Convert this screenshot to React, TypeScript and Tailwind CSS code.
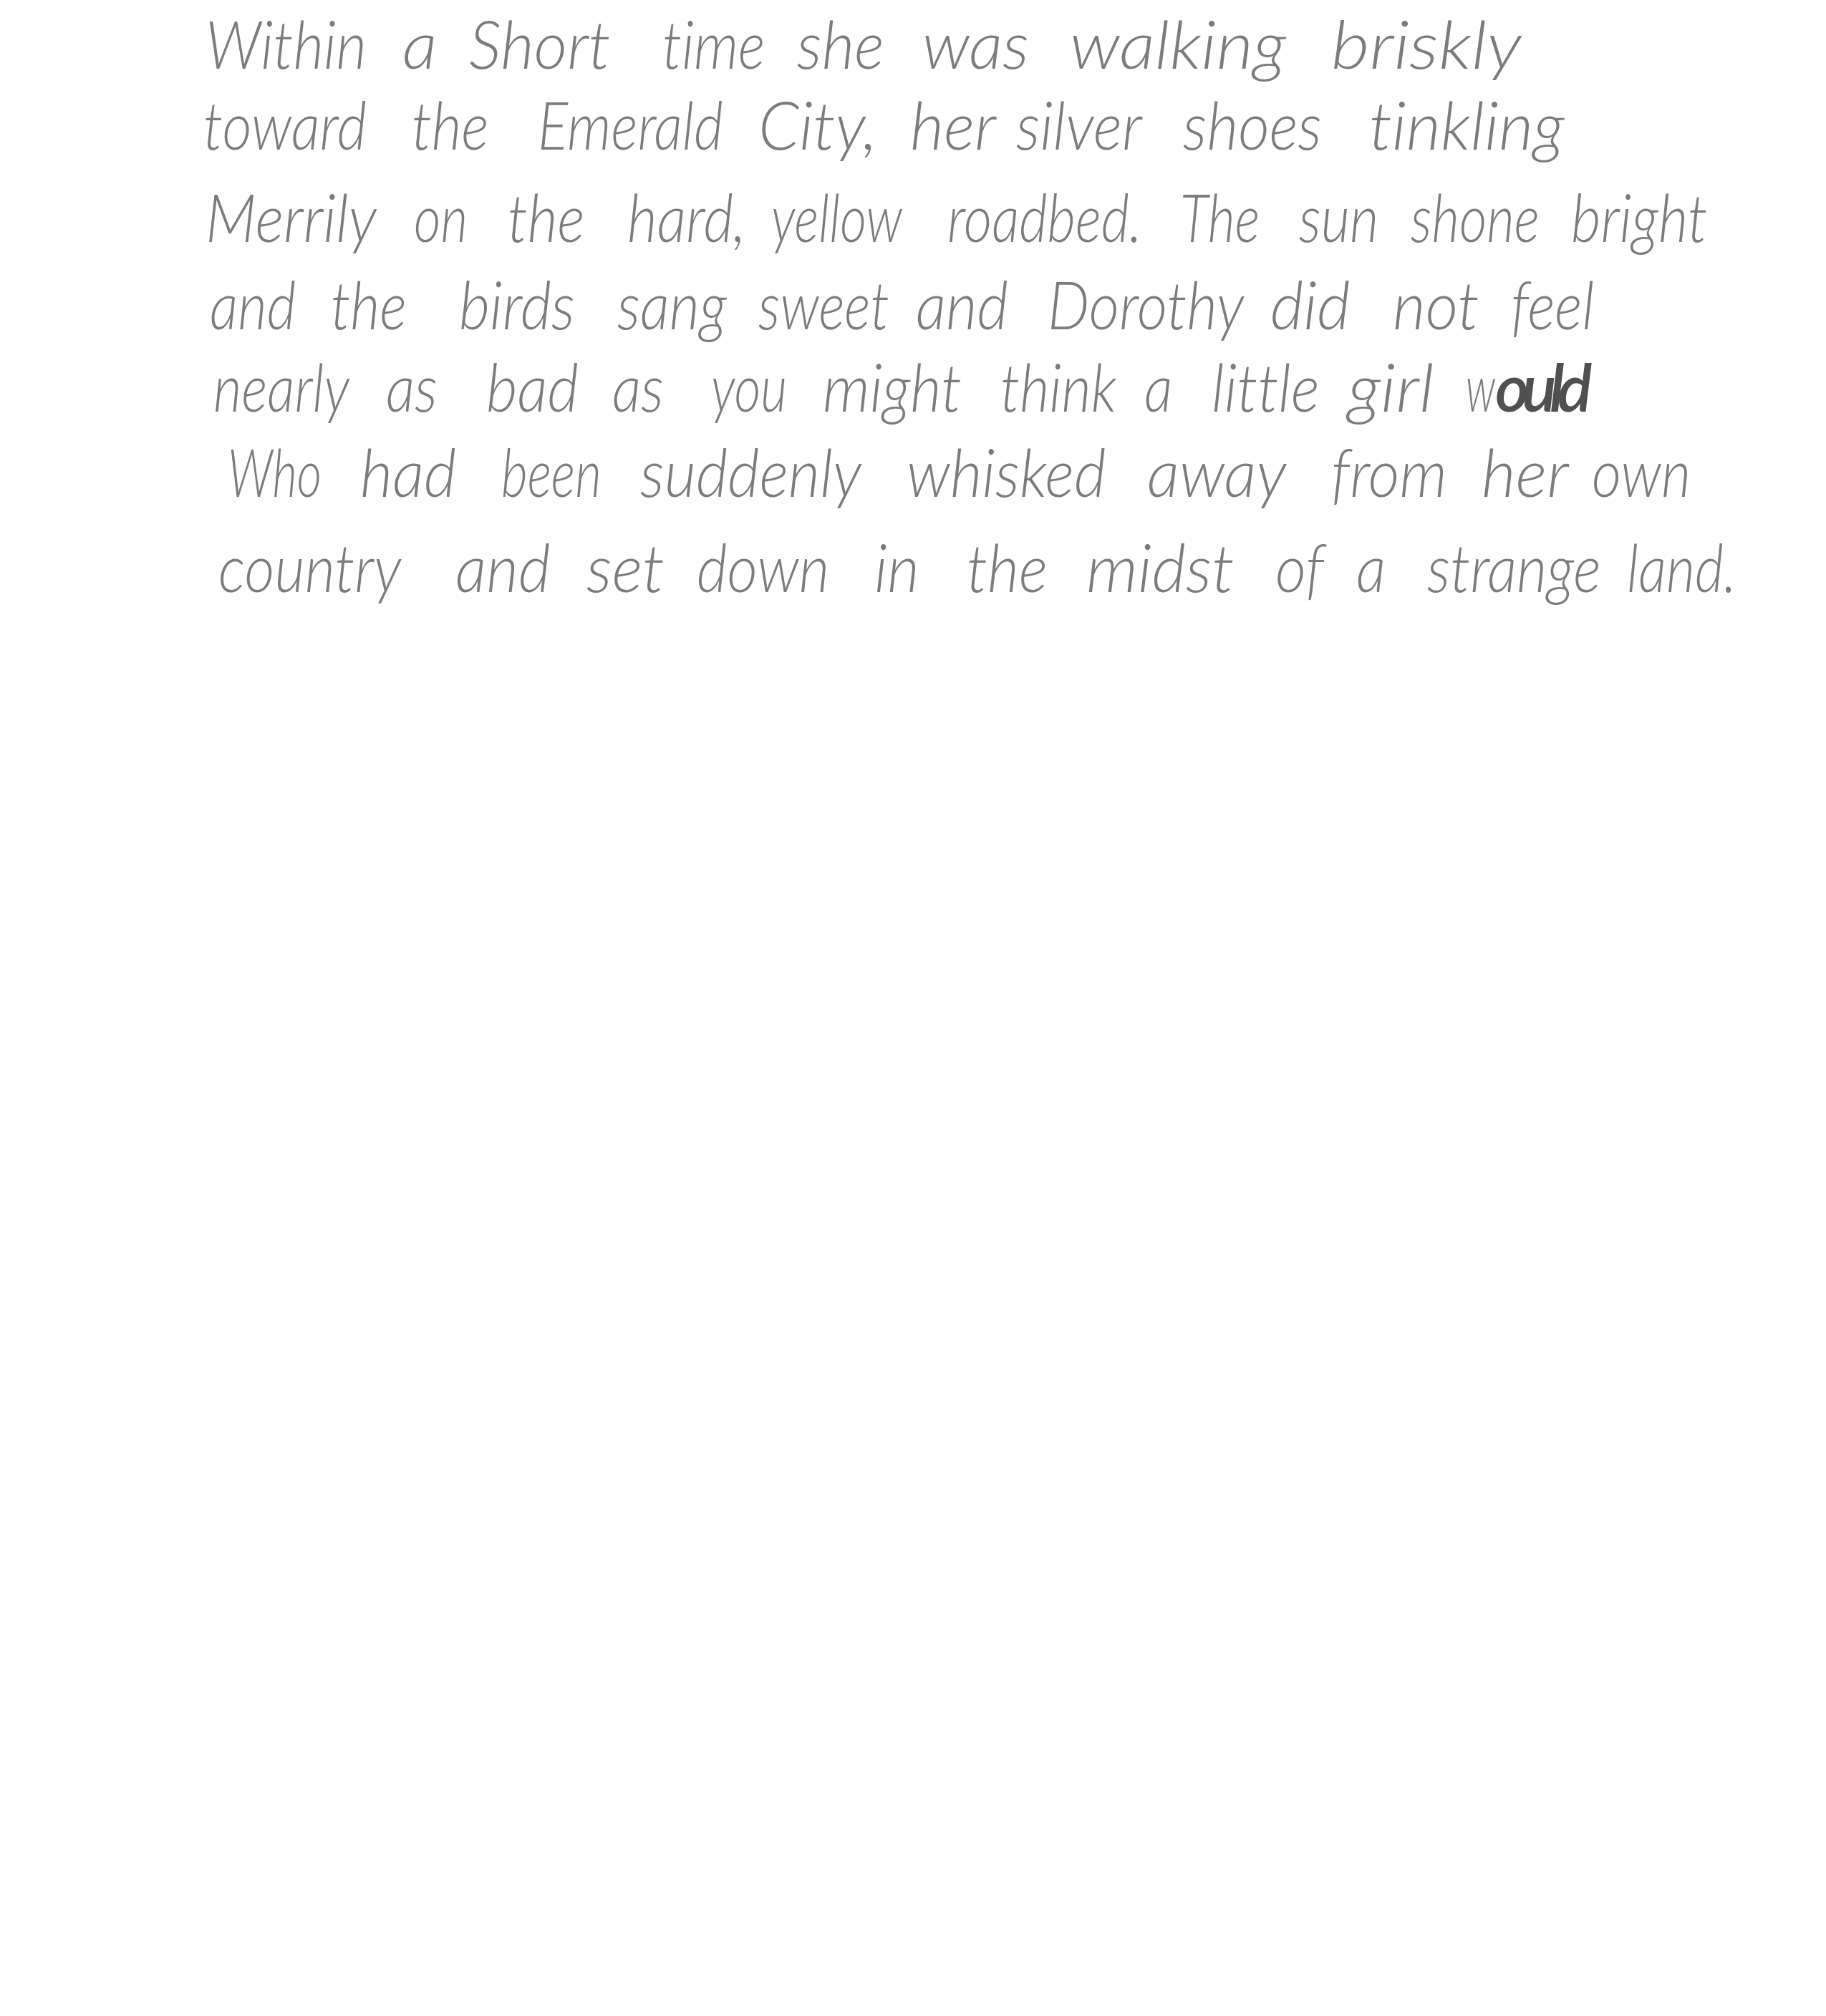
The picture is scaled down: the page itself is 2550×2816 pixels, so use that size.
import { useLayoutEffect, useRef } from "react";

// word spans measured on the 1420px wide preview, scaled up when drawn
const SCALE = 2550 / 1420;

type W = [string, number, number, boolean?];

const lines: { h: string; words: W[] }[] = [
  {
    h: "h-[107px]",
    words: [["Within", 160, 285], ["a", 313, 340], ["Short", 365, 475], ["time", 515, 595], ["she", 620, 688], ["was", 717, 800], ["walking", 832, 1000], ["briskly", 1035, 1183]],
  },
  {
    h: "h-[113px]",
    words: [["toward", 158, 285], ["the", 320, 380], ["Emerald", 418, 562], ["City,", 590, 682], ["her", 708, 775], ["silver", 790, 888], ["shoes", 920, 1028], ["tinkling", 1065, 1217]],
  },
  {
    h: "h-[129px]",
    words: [["Merrily", 160, 293], ["on", 322, 364], ["the", 395, 455], ["hard,", 488, 580], ["yellow", 600, 702], ["roadbed.", 737, 888], ["The", 918, 980], ["sun", 1010, 1072], ["shone", 1097, 1197], ["bright", 1222, 1328]],
  },
  {
    h: "h-[122px]",
    words: [["and", 163, 230], ["the", 257, 316], ["birds", 357, 447], ["sang", 480, 565], ["sweet", 590, 692], ["and", 712, 784], ["Dorothy", 815, 968], ["did", 988, 1050], ["not", 1083, 1150], ["feel", 1175, 1240]],
  },
  {
    h: "h-[115px]",
    words: [["nearly", 166, 272], ["as", 300, 340], ["bad", 378, 450], ["as", 476, 516], ["you", 553, 612], ["might", 640, 748], ["think", 778, 868], ["a", 890, 912], ["little", 942, 1026], ["girl", 1048, 1115], ["w", 1140, 1163], ["ould", 1163, 1233, true]],
  },
  {
    h: "h-[119px]",
    words: [["Who", 177, 250], ["had", 280, 355], ["been", 390, 468], ["suddenly", 498, 670], ["whisked", 705, 860], ["away", 892, 1000], ["from", 1035, 1125], ["her", 1152, 1220], ["own", 1238, 1315]],
  },
  {
    h: "h-[133px]",
    words: [["country", 170, 312], ["and", 354, 428], ["set", 456, 517], ["down", 542, 645], ["in", 680, 715], ["the", 752, 815], ["midst", 845, 960], ["of", 992, 1030], ["a", 1055, 1078], ["strange", 1110, 1245], ["land.", 1265, 1350]],
  },
];

function Word({ text, start, end, prevEnd, dark }: { text: string; start: number; end: number; prevEnd: number; dark?: boolean }) {
  const ref = useRef<HTMLSpanElement>(null);
  const width = (end - start) * SCALE;

  // squeeze each word to the width it has in the scan
  useLayoutEffect(() => {
    const el = ref.current;
    if (el) el.style.transform = `scaleX(${width / el.offsetWidth})`;
  }, [width]);

  return (
    <div className="shrink-0" style={{ width, marginLeft: (start - prevEnd) * SCALE }}>
      <span
        ref={ref}
        className={
          dark
            ? "inline-block origin-left whitespace-nowrap font-semibold tracking-[-10px] text-[#505050]"
            : "inline-block origin-left whitespace-nowrap"
        }
      >
        {text}
      </span>
    </div>
  );
}

export default function App() {
  return (
    <div className="w-[2550px] h-[2816px] bg-white overflow-hidden font-['Lato',sans-serif] font-light italic [font-variant-ligatures:none] text-[#7c7c7c] text-[92px] leading-none">
      {lines.map((line, i) => (
        <div key={i} className={`flex items-end ${line.h}`}>
          {line.words.map(([text, start, end, dark], j) => (
            <Word
              key={j}
              text={text}
              start={start}
              end={end}
              dark={dark}
              prevEnd={j === 0 ? 0 : line.words[j - 1][2]}
            />
          ))}
        </div>
      ))}
    </div>
  );
}
